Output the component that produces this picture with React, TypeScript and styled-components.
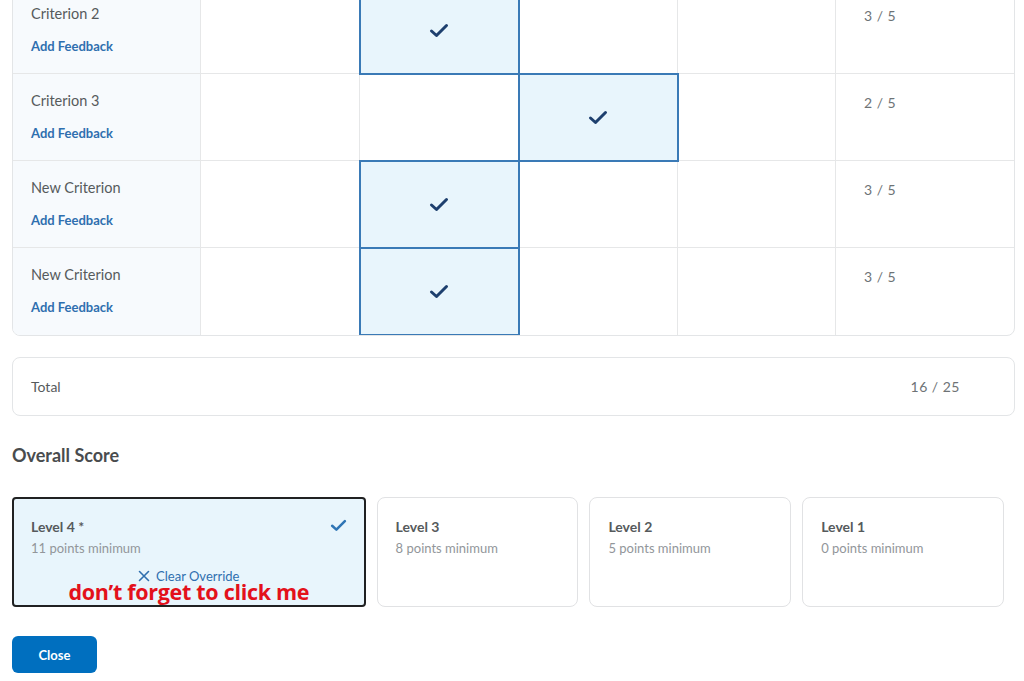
import React from "react";
import styled, { createGlobalStyle } from "styled-components";

const GlobalStyle = createGlobalStyle`
  html, body {
    margin: 0;
    padding: 0;
    background: #ffffff;
    font-family: Lato, "Open Sans", sans-serif;
    overflow: hidden;
  }
`;

const Page = styled.div`
  width: 1003px;
  padding: 0 9px 0 12px;
`;

const Table = styled.div`
  margin-top: -14px;
  display: grid;
  grid-template-columns: 188px 159px 159px 159px 158px 1fr;
  border: 1px solid #e3e5e7;
  border-radius: 8px;
  overflow: hidden;
`;

const Cell = styled.div<{ $last?: boolean; $bottom?: boolean }>`
  box-sizing: border-box;
  height: 87px;
  border-right: ${({ $last }) => ($last ? "none" : "1px solid #e6e7e8")};
  border-bottom: ${({ $bottom }) => ($bottom ? "none" : "1px solid #e6e7e8")};
  position: relative;
`;

const CriterionCell = styled(Cell)`
  background: #f7fafd;
  padding: 18px 0 0 18px;
`;

const CriterionName = styled.div`
  font-size: 14.5px;
  color: #565a5c;
  line-height: 18px;
`;

const FeedbackLink = styled.div`
  margin-top: 15px;
  font-size: 13px;
  font-weight: 700;
  color: #2f6faf;
  line-height: 16px;
`;

const LevelCell = styled(Cell)<{ $selected?: boolean }>`
  display: flex;
  align-items: center;
  justify-content: center;
  background: ${({ $selected }) => ($selected ? "#e8f5fc" : "#ffffff")};
  ${({ $selected }) =>
    $selected &&
    `outline: 2px solid #3a7ab6; outline-offset: -1px; z-index: 1;`}
`;

const ScoreCell = styled(Cell)`
  padding: 20px 0 0 28px;
  font-size: 14px;
  color: #6e7376;
  line-height: 18px;
  letter-spacing: 0.5px;
`;

const TotalBox = styled.div`
  margin-top: 21px;
  height: 57px;
  border: 1px solid #e3e5e7;
  border-radius: 8px;
  display: flex;
  align-items: center;
  justify-content: space-between;
  padding: 0 54px 0 18px;
  font-size: 14px;
  color: #565a5c;
`;

const TotalValue = styled.span`
  color: #6e7376;
  letter-spacing: 0.5px;
`;

const Heading = styled.h2`
  margin: 28px 0 0;
  font-size: 18px;
  font-weight: 700;
  color: #494c4e;
  line-height: 22px;
`;

const Levels = styled.div`
  margin-top: 31px;
  display: flex;
  gap: 11px;
  width: 992px;
`;

const LevelCard = styled.div<{ $selected?: boolean; $width: number }>`
  box-sizing: border-box;
  position: relative;
  width: ${({ $width }) => $width}px;
  height: 110px;
  border: ${({ $selected }) =>
    $selected ? "2px solid #202122" : "1px solid #e1e2e4"};
  border-radius: ${({ $selected }) => ($selected ? "4px" : "8px")};
  background: ${({ $selected }) => ($selected ? "#e8f5fc" : "#ffffff")};
  padding: ${({ $selected }) => ($selected ? "19px 17px" : "20px 18px")};
`;

const LevelTitle = styled.div`
  font-size: 14px;
  font-weight: 700;
  color: #565a5c;
  line-height: 18px;
`;

const LevelSub = styled.div`
  margin-top: 4px;
  font-size: 13px;
  color: #92969a;
  line-height: 16px;
`;

const CardCheck = styled.div`
  position: absolute;
  top: 17px;
  right: 17px;
`;

const ClearOverride = styled.div`
  margin-top: 12px;
  display: flex;
  align-items: center;
  justify-content: center;
  gap: 6px;
  font-size: 13px;
  color: #2f6faf;
  line-height: 16px;
`;

const Annotation = styled.div`
  position: absolute;
  left: 0;
  right: 0;
  top: 81px;
  text-align: center;
  font-family: "Open Sans", sans-serif;
  font-weight: 700;
  font-size: 21.5px;
  line-height: 24px;
  color: #e3111b;
  letter-spacing: -0.3px;
`;

const CloseButton = styled.button`
  margin-top: 29px;
  width: 85px;
  height: 37px;
  border: none;
  border-radius: 6px;
  background: #006fbf;
  color: #ffffff;
  font-family: Lato, sans-serif;
  font-size: 13px;
  font-weight: 700;
  cursor: pointer;
`;

const Check = ({ size = 20, color = "#1d3f6e" }: { size?: number; color?: string }) => (
  <svg width={size} height={size * 0.75} viewBox="0 0 20 15" fill="none">
    <path d="M2.5 8 L7.5 12.5 L17.5 2.5" stroke={color} strokeWidth={3} strokeLinecap="round" strokeLinejoin="round" />
  </svg>
);

const rows = [
  { name: "Criterion 2", level: 1, score: "3 / 5" },
  { name: "Criterion 3", level: 2, score: "2 / 5" },
  { name: "New Criterion", level: 1, score: "3 / 5" },
  { name: "New Criterion", level: 1, score: "3 / 5" },
];

const levels = [
  { title: "Level 4 *", sub: "11 points minimum", width: 354, selected: true },
  { title: "Level 3", sub: "8 points minimum", width: 202 },
  { title: "Level 2", sub: "5 points minimum", width: 202 },
  { title: "Level 1", sub: "0 points minimum", width: 202 },
];

const App = () => {
  return (
    <Page>
      <GlobalStyle />
      <Table>
        {rows.map((row, r) => {
          const bottom = r === rows.length - 1;
          return (
            <React.Fragment key={r}>
              <CriterionCell $bottom={bottom}>
                <CriterionName>{row.name}</CriterionName>
                <FeedbackLink>Add Feedback</FeedbackLink>
              </CriterionCell>
              {[0, 1, 2, 3].map((c) => (
                <LevelCell key={c} $bottom={bottom} $selected={row.level === c}>
                  {row.level === c && <Check />}
                </LevelCell>
              ))}
              <ScoreCell $bottom={bottom} $last>
                {row.score}
              </ScoreCell>
            </React.Fragment>
          );
        })}
      </Table>
      <TotalBox>
        <span>Total</span>
        <TotalValue>16 / 25</TotalValue>
      </TotalBox>
      <Heading>Overall Score</Heading>
      <Levels>
        {levels.map((l) => (
          <LevelCard key={l.title} $selected={l.selected} $width={l.width}>
            <LevelTitle>{l.title}</LevelTitle>
            <LevelSub>{l.sub}</LevelSub>
            {l.selected && (
              <>
                <CardCheck>
                  <Check size={17} color="#2f75b5" />
                </CardCheck>
                <ClearOverride>
                  <svg width="12" height="12" viewBox="0 0 12 12">
                    <path d="M1.5 1.5 L10.5 10.5 M10.5 1.5 L1.5 10.5" stroke="#2f6faf" strokeWidth={1.6} strokeLinecap="round" />
                  </svg>
                  Clear Override
                </ClearOverride>
                <Annotation>don’t forget to click me</Annotation>
              </>
            )}
          </LevelCard>
        ))}
      </Levels>
      <CloseButton>Close</CloseButton>
    </Page>
  );
};

export default App;
